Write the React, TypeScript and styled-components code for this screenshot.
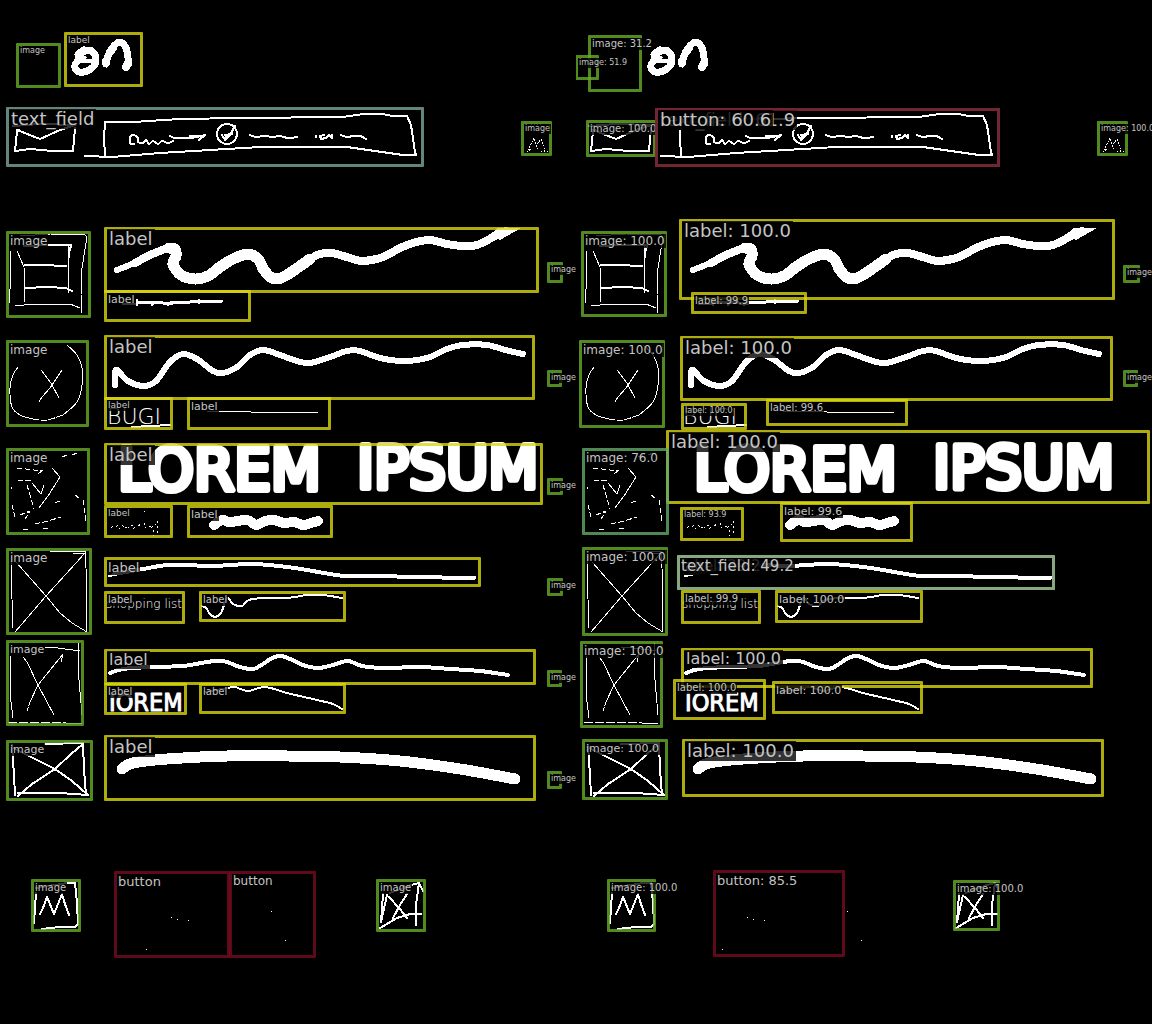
import React from "react";
import styled, { createGlobalStyle } from "styled-components";

const GlobalStyle = createGlobalStyle`
  body {
    margin: 0;
    background: #000;
    font-family: "DejaVu Sans", Verdana, sans-serif;
  }
`;

const FRAME_WIDTH = 576;
const FRAME_HEIGHT = 1024;

const tones = {
  image: "rgba(102, 172, 40, 0.8)",
  label: "rgba(218, 214, 16, 0.8)",
  text_field: "rgba(125, 166, 155, 0.8)",
  button: "rgba(118, 12, 32, 0.8)",
  moss: "rgba(98, 170, 102, 0.8)",
};

type Tone = keyof typeof tones;

interface Detection {
  kind: "image" | "label" | "text_field" | "button";
  /** left, top, right, bottom in frame units */
  box: [number, number, number, number];
  size: number;
  score?: string;
  tone?: Tone;
}

const Comparison = styled.main`
  display: grid;
  grid-template-columns: 1fr 1fr;
  background: #000;
`;

const Frame = styled.section`
  position: relative;
  overflow: hidden;
  aspect-ratio: ${FRAME_WIDTH} / ${FRAME_HEIGHT};
`;

const SketchCanvas = styled.svg`
  display: block;
  width: 100%;
  height: 100%;
  fill: none;
  stroke: #fff;
  stroke-linecap: round;
  stroke-linejoin: round;
  shape-rendering: crispEdges;
`;

const HandText = styled.text<{ $size: number; $weight?: number; $ink?: number; $family?: string }>`
  font-family: ${(p) => p.$family ?? "DejaVu Sans"}, "DejaVu Sans", sans-serif;
  font-size: ${(p) => p.$size}px;
  font-weight: ${(p) => p.$weight ?? 400};
  fill: #fff;
  stroke-width: ${(p) => p.$ink ?? 0}px;
`;

const Region = styled.div<{ $box: Detection["box"]; $tone: Tone }>`
  position: absolute;
  box-sizing: border-box;
  left: ${(p) => (p.$box[0] / FRAME_WIDTH) * 100}%;
  top: ${(p) => (p.$box[1] / FRAME_HEIGHT) * 100}%;
  width: ${(p) => ((p.$box[2] - p.$box[0]) / FRAME_WIDTH) * 100}%;
  height: ${(p) => ((p.$box[3] - p.$box[1]) / FRAME_HEIGHT) * 100}%;
  border: 3px solid ${(p) => tones[p.$tone]};
  border-radius: 1px;
`;

const Tag = styled.span<{ $size: number }>`
  position: absolute;
  left: 0;
  top: ${(p) => (p.$size > 15 ? -1 : 0)}px;
  padding: 0 ${(p) => (p.$size > 15 ? 2 : 1)}px;
  background: rgba(0, 0, 0, 0.8);
  color: #c4c4c4;
  font-size: ${(p) => p.$size}px;
  line-height: ${(p) => p.$size + 2}px;
  white-space: nowrap;
`;

type Point = [number, number];

/** Catmull-Rom curve through the points, written as cubic segments. */
function smooth(flat: number[]): string {
  const pts: Point[] = [];
  for (let i = 0; i < flat.length; i += 2) pts.push([flat[i], flat[i + 1]]);
  let d = `M${pts[0][0]} ${pts[0][1]}`;
  for (let i = 0; i < pts.length - 1; i++) {
    const a = pts[Math.max(i - 1, 0)];
    const b = pts[i];
    const c = pts[i + 1];
    const e = pts[Math.min(i + 2, pts.length - 1)];
    d += ` C${b[0] + (c[0] - a[0]) / 6} ${b[1] + (c[1] - a[1]) / 6} ${c[0] - (e[0] - b[0]) / 6} ${
      c[1] - (e[1] - b[1]) / 6
    } ${c[0]} ${c[1]}`;
  }
  return d;
}

const Stroke = ({ pts, w = 1, dash }: { pts: number[]; w?: number; dash?: string }) => (
  <path d={smooth(pts)} strokeWidth={w} strokeDasharray={dash} />
);

const Line = ({ d, w = 1, dash }: { d: string; w?: number; dash?: string }) => (
  <path d={d} strokeWidth={w} strokeDasharray={dash} />
);

const HeaderSketch = () => (
  <g>
    <Stroke w={7} pts={[84, 50, 92, 51, 96, 59, 93, 67, 84, 72, 77, 71, 75, 65, 79, 59, 78, 54, 84, 50]} />
    <Line w={4} d="M79 61H95" />
    <Line w={5} d="M80 54L86 52 M80 57L84 58" />
    <Stroke w={7} pts={[106, 64, 108, 56, 113, 47, 120, 42, 126, 48, 128, 58, 129, 63]} />
    <Line w={8} d="M106 61V63 M126 67L128 63 M110 52L113 48" />

    <Line w={2} d="M19 130L17 131L15 151L30 149L52 151L73 151L75 128 M17 130L40 139L60 130L75 125 M13 126L40 124L75 125" />
    <Line
      w={2}
      d="M105 155L104 138L105 122L133 122L180 119L240 118L343 117L363 114L383 114L392 116L407 116L411 125L415 152L416 155L403 155L347 147L260 147L160 153L112 157L85 156"
    />
    <Stroke
      w={2}
      pts={[134, 144, 130, 143, 130, 137, 134, 135, 138, 138, 138, 142, 143, 143, 146, 140, 149, 144, 153, 141, 158, 144, 162, 141, 168, 143, 173, 141]}
    />
    <Line w={2} d="M170 136L174 138H192L205 135L199 140 M190 136H204" />
    <ellipse cx="227" cy="134" rx="10" ry="10" strokeWidth="2" />
    <Line w={2} d="M222 135L225 140L230 135L235 126 M225 135L232 134 M224 138L229 136" />
    <Stroke w={2} pts={[250, 135, 256, 137, 264, 136, 273, 137, 280, 136, 288, 138, 297, 137]} />
    <Line w={2} d="M316 136V137 M324 135L320 136L321 139L326 138L329 135L332 138V135" />
    <Stroke w={2} pts={[341, 135, 347, 137, 353, 136, 360, 136, 366, 139]} />
    <Line dash="1 2" d="M528 150L534 138L538 150 M536 146L541 139L545 151 M527 152L531 149 M541 151H549 M531 124H542" />
  </g>
);

const ThumbnailSketches = () => (
  <g>
    <Line d="M10 251L11 275L9 303 M20 236L50 234L85 235L87 237L82 268L81 295L82 313 M15 306L24 305L47 304H70L80 308" />
    <Line w={2} d="M24 246L50 245H71L70 250 M25 288L47 287L66 288L72 291" />
    <Line d="M69 246L68 258V293 M24 266L40 265L67 267 M24 265L40 264L67 266 M70 247L69 258" />
    <Line d="M17 251L24 267L25 302" />

    <Stroke pts={[18, 367, 13, 375, 10, 388, 12, 407, 20, 415, 33, 419]} />
    <Stroke dash="6 2" pts={[33, 419, 47, 420, 63, 415]} />
    <Stroke pts={[63, 415, 77, 402, 82, 385, 82, 368, 77, 355, 67, 345]} />
    <Line d="M41 370L51 383L59 398 M62 370L50 388L42 397L39 402" />

    <Line d="M52 468L60 477L48 496L39 508 M32 483L41 494L44 485" />
    <Line
      dash="5 3"
      d="M17 468L34 470L43 471 M27 485L34 509 M18 481L32 480 M38 474L44 469 M62 457L67 455 M72 455L77 453 M12 505L15 517 M20 515L30 511L25 519 M35 524L48 521L61 517 M83 500L86 522 M75 495L79 498 M23 529H30 M43 529L50 528 M55 503L62 500 M11 487V489"
    />

    <Line d="M12 556L11 570L13 628 M50 551H85 L86 568L87 632 M73 553H85 M16 562L46 596L60 613L72 623L87 632 M85 553L46 596L15 632" />

    <Line d="M10 655L11 702L13 718 M78 643V668L82 715 M45 647L58 648L80 651 M66 723H82" />
    <Line dash="9 2" d="M8 722H66" />
    <Line d="M23 657L27 662L38 685L54 715 M63 654L61 662 M63 654L38 685L30 702" />
    <Line dash="4 2" d="M30 702L27 711" />

    <Line w={2} d="M12 745L14 775L15 795 M45 744L83 743L84 770L86 795 M18 793H60L88 795" />
    <Line w={2} d="M13 748L25 754L55 769L72 781L88 795 M83 744L71 754L55 769L32 784L18 796" />
  </g>
);

const RowSketches = () => (
  <g>
    <Stroke w={6} pts={[117, 270, 132, 264, 150, 255, 160, 250, 170, 247]} />
    <Stroke w={8} pts={[135, 263, 150, 255, 160, 251, 170, 247]} />
    <Stroke
      w={11}
      pts={[169, 248, 175, 249, 176, 256, 173, 264, 181, 275, 195, 279, 208, 276, 220, 267, 233, 259, 248, 254, 258, 259, 264, 270, 272, 278, 281, 278, 293, 271, 310, 259]}
    />
    <Stroke
      w={8}
      pts={[310, 259, 320, 254, 332, 253, 350, 258, 363, 261, 383, 257, 400, 248, 413, 243, 430, 240, 447, 244, 463, 246, 477, 245, 497, 235, 506, 231]}
    />
    <path d="M488 236L498 228H521L500 240Z" fill="#fff" stroke="none" />
    <Line w={3} d="M137 303L143 302L151 303L158 302L168 304L177 302L190 302L200 301L210 302L222 301" />
    <Line w={2} d="M123 304H137 M137 300V305 M152 305L156 302 M168 305L171 302 M199 300V303" />

    <Stroke
      w={6}
      pts={[115, 385, 115, 374, 117, 370, 128, 381, 144, 386, 156, 381, 170, 362, 183, 354, 197, 359, 213, 371, 223, 373, 237, 367, 250, 355, 263, 350, 280, 355, 297, 361, 310, 363, 330, 357, 347, 351, 360, 351, 380, 358, 403, 361, 427, 358, 447, 349, 463, 345, 487, 345, 505, 350, 523, 354]}
    />
    <HandText x="107" y="424" $size={22} $weight={200}>
      BUGI
    </HandText>
    <Line w={2} d="M132 427L170 425" />
    <Line d="M207 411H240L262 413L290 412H318" />

    <HandText x="118" y="490" $size={58} $ink={6}>
      LOREM
    </HandText>
    <HandText x="357" y="488" $size={58} $ink={6}>
      IPSUM
    </HandText>
    <Line dash="1 5" d="M111 528L120 525L132 529L142 523L152 527L158 523" />
    <Line dash="1 6" d="M112 526L122 529L136 524L148 529L156 525" />
    <Line dash="2 3" d="M144 511V512 M153 530V536 M157 521V535" />
    <Stroke
      w={10}
      pts={[214, 525, 222, 520, 230, 522, 247, 520, 256, 525, 265, 521, 274, 520, 284, 523, 294, 522, 303, 525, 311, 523, 318, 521]}
    />

    <Line w={2} d="M109 576L114 575" />
    <Stroke
      w={4}
      pts={[114, 574, 143, 569, 167, 565, 187, 565, 213, 566, 253, 564, 287, 567, 307, 570, 330, 574, 347, 576, 380, 576, 413, 577, 474, 578]}
    />
    <HandText x="106" y="608" $size={12} $weight={200}>
      shopping list
    </HandText>
    <Stroke
      w={2}
      pts={[202, 606, 206, 608, 210, 614, 215, 617, 221, 613, 227, 598, 233, 604, 242, 606, 252, 599, 287, 598, 307, 595, 323, 595, 342, 598]}
    />

    <Stroke
      w={4}
      pts={[110, 673, 123, 669, 150, 667, 183, 666, 207, 662, 223, 661, 240, 667, 253, 669, 263, 664, 272, 658, 281, 656, 290, 659, 303, 665, 318, 668, 333, 665, 348, 661, 362, 666, 385, 668, 420, 667, 450, 669, 480, 671, 508, 675]}
    />
    <HandText x="109" y="711" $size={25} $ink={1} $family="DejaVu Sans Condensed">
      IOREM
    </HandText>
    <Stroke w={2} pts={[205, 692, 228, 688, 235, 687, 248, 691, 265, 687, 287, 693, 317, 700, 333, 704, 342, 709]} />

    <Stroke w={11} pts={[122, 769, 133, 763, 167, 759, 227, 756, 287, 756, 340, 757, 400, 761, 460, 769, 515, 779]} />
  </g>
);

const FooterSketch = () => (
  <g>
    <Line w={2} d="M36 893L34 923 M36 888L67 883L75 883L77 903L78 924L75 927L60 927L42 929" />
    <Line w={2} d="M40 914L43 908L47 897L54 914L62 894L65 904L69 915" />
    <Line w={2} d="M383 894L381 922L387 895 M380 928L397 918L410 914L421 914 M389 897L400 909L407 918 M407 894L400 905L393 918" />
    <Line w={2} d="M411 885L419 883L416 905V925 M419 883L423 891 M390 893L411 885" />
    <Line d="M171 917h1 M177 919h1 M188 920h1 M146 949h1 M271 911h1 M285 940h1" />
  </g>
);

const Sketch = () => (
  <SketchCanvas viewBox={`0 0 ${FRAME_WIDTH} ${FRAME_HEIGHT}`} aria-hidden="true">
    <HeaderSketch />
    <ThumbnailSketches />
    <RowSketches />
    <FooterSketch />
  </SketchCanvas>
);

const groundTruth: Detection[] = [
  { kind: "image", box: [16, 43, 61, 88], size: 8 },
  { kind: "label", box: [64, 32, 143, 87], size: 9 },
  { kind: "text_field", box: [6, 107, 424, 167], size: 18 },
  { kind: "image", box: [521, 121, 552, 156], size: 8 },

  { kind: "image", box: [6, 231, 91, 318], size: 12 },
  { kind: "label", box: [104, 227, 539, 293], size: 18 },
  { kind: "label", box: [104, 290, 251, 322], size: 11 },
  { kind: "image", box: [547, 262, 563, 283], size: 8 },

  { kind: "image", box: [6, 340, 89, 427], size: 12 },
  { kind: "label", box: [104, 335, 535, 400], size: 18 },
  { kind: "label", box: [104, 397, 173, 430], size: 9 },
  { kind: "label", box: [187, 397, 331, 430], size: 11 },
  { kind: "image", box: [547, 370, 562, 387], size: 8 },

  { kind: "image", box: [6, 448, 90, 535], size: 12 },
  { kind: "label", box: [104, 443, 543, 505], size: 18 },
  { kind: "label", box: [104, 505, 173, 538], size: 9 },
  { kind: "label", box: [187, 505, 333, 538], size: 11 },
  { kind: "image", box: [547, 478, 563, 495], size: 8 },

  { kind: "image", box: [6, 548, 92, 635], size: 12 },
  { kind: "label", box: [104, 557, 481, 587], size: 13 },
  { kind: "label", box: [104, 591, 185, 624], size: 10 },
  { kind: "label", box: [199, 591, 346, 622], size: 10 },
  { kind: "image", box: [547, 578, 563, 596], size: 8 },

  { kind: "image", box: [6, 640, 84, 726], size: 11 },
  { kind: "label", box: [104, 649, 536, 685], size: 16 },
  { kind: "label", box: [104, 683, 187, 715], size: 10 },
  { kind: "label", box: [199, 683, 346, 714], size: 10 },
  { kind: "image", box: [547, 670, 562, 687], size: 8 },

  { kind: "image", box: [6, 740, 93, 801], size: 11 },
  { kind: "label", box: [104, 735, 536, 801], size: 18 },
  { kind: "image", box: [547, 771, 562, 789], size: 8 },

  { kind: "image", box: [31, 879, 81, 932], size: 10 },
  { kind: "button", box: [114, 871, 230, 958], size: 13 },
  { kind: "button", box: [229, 871, 316, 958], size: 12 },
  { kind: "image", box: [376, 879, 426, 932], size: 10 },
];

const predictions: Detection[] = [
  { kind: "image", score: "31.2", box: [12, 35, 66, 92], size: 10 },
  { kind: "image", score: "51.9", box: [-1, 55, 23, 80], size: 8 },
  { kind: "image", score: "100.0", box: [10, 120, 80, 157], size: 10 },
  { kind: "text_field", score: "61.9", box: [79, 108, 424, 167], size: 18 },
  { kind: "button", score: "60.6", box: [79, 108, 424, 167], size: 18 },
  { kind: "image", score: "100.0", box: [521, 121, 552, 156], size: 8 },

  { kind: "image", score: "100.0", box: [5, 231, 91, 317], size: 12 },
  { kind: "label", score: "100.0", box: [103, 219, 539, 300], size: 18 },
  { kind: "label", score: "99.9", box: [115, 292, 231, 314], size: 10 },
  { kind: "image", score: "100.0", box: [547, 265, 564, 283], size: 8 },

  { kind: "image", score: "100.0", box: [3, 340, 89, 428], size: 12 },
  { kind: "label", score: "100.0", box: [104, 336, 537, 401], size: 18 },
  { kind: "label", score: "100.0", box: [105, 403, 171, 430], size: 8 },
  { kind: "label", score: "99.6", box: [190, 399, 332, 426], size: 10 },
  { kind: "image", score: "100.0", box: [547, 370, 562, 387], size: 8 },

  { kind: "label", score: "100.0", box: [90, 430, 574, 504], size: 18 },
  { kind: "image", score: "76.0", box: [6, 448, 93, 535], size: 12, tone: "moss" },
  { kind: "label", score: "93.9", box: [104, 507, 168, 541], size: 8 },
  { kind: "label", score: "99.6", box: [204, 502, 337, 542], size: 11 },

  { kind: "image", score: "100.0", box: [6, 547, 92, 636], size: 12 },
  { kind: "label", score: "39.2", box: [101, 555, 479, 590], size: 15 },
  { kind: "text_field", score: "49.2", box: [101, 555, 479, 590], size: 15 },
  { kind: "label", score: "99.9", box: [105, 590, 185, 624], size: 10 },
  { kind: "label", score: "100.0", box: [199, 590, 347, 623], size: 11 },

  { kind: "image", score: "100.0", box: [4, 641, 87, 728], size: 12 },
  { kind: "label", score: "100.0", box: [105, 648, 517, 688], size: 16 },
  { kind: "label", score: "100.0", box: [97, 679, 190, 720], size: 10 },
  { kind: "label", score: "100.0", box: [196, 681, 347, 714], size: 11 },

  { kind: "image", score: "100.0", box: [6, 739, 92, 800], size: 11 },
  { kind: "label", score: "100.0", box: [106, 739, 528, 797], size: 18 },

  { kind: "image", score: "100.0", box: [31, 879, 80, 932], size: 10 },
  { kind: "button", score: "85.5", box: [137, 870, 269, 957], size: 13 },
  { kind: "image", score: "100.0", box: [377, 880, 424, 931], size: 10 },
];

const AnnotatedFrame = ({ name, detections }: { name: string; detections: Detection[] }) => (
  <Frame aria-label={name}>
    <Sketch />
    {detections.map((item, index) => (
      <Region key={index} $box={item.box} $tone={item.tone ?? item.kind}>
        <Tag $size={item.size}>{item.score ? `${item.kind}: ${item.score}` : item.kind}</Tag>
      </Region>
    ))}
  </Frame>
);

export default function App() {
  return (
    <>
      <GlobalStyle />
      <Comparison>
        <AnnotatedFrame name="Ground truth" detections={groundTruth} />
        <AnnotatedFrame name="Predictions" detections={predictions} />
      </Comparison>
    </>
  );
}
